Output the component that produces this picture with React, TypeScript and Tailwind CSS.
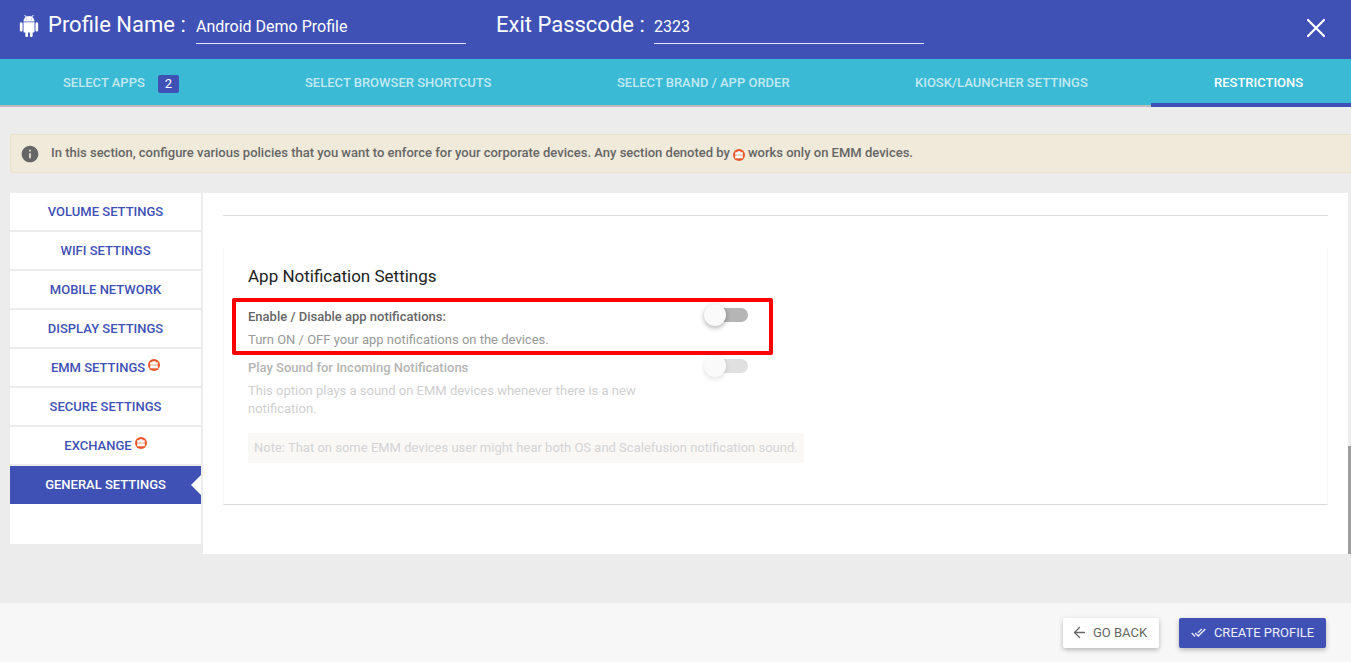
import { ArrowLeft, X } from "lucide-react";
import { MdDoneAll, MdInfo } from "react-icons/md";

const tabs = [
  { label: "SELECT APPS", width: "w-[242px]", badge: "2" },
  { label: "SELECT BROWSER SHORTCUTS", width: "w-[312px]" },
  { label: "SELECT BRAND / APP ORDER", width: "w-[298px]" },
  { label: "KIOSK/LAUNCHER SETTINGS", width: "w-[299px]" },
  { label: "RESTRICTIONS", width: "w-[200px]", active: true },
];

const sections = [
  { label: "VOLUME SETTINGS" },
  { label: "WIFI SETTINGS" },
  { label: "MOBILE NETWORK" },
  { label: "DISPLAY SETTINGS" },
  { label: "EMM SETTINGS", emm: true },
  { label: "SECURE SETTINGS" },
  { label: "EXCHANGE", emm: true },
  { label: "GENERAL SETTINGS", active: true },
];

function AndroidIcon({ className }: { className?: string }) {
  return (
    <svg viewBox="0 0 24 24" fill="currentColor" className={className}>
      <path d="M6 18c0 .55.45 1 1 1h1v3.5c0 .83.67 1.5 1.5 1.5s1.5-.67 1.5-1.5V19h2v3.5c0 .83.67 1.5 1.5 1.5s1.5-.67 1.5-1.5V19h1c.55 0 1-.45 1-1V8H6v10zM3.5 8C2.67 8 2 8.67 2 9.5v7c0 .83.67 1.5 1.5 1.5S5 17.33 5 16.5v-7C5 8.67 4.33 8 3.5 8zm17 0c-.83 0-1.5.67-1.5 1.5v7c0 .83.67 1.5 1.5 1.5s1.5-.67 1.5-1.5v-7c0-.83-.67-1.5-1.5-1.5zm-4.97-5.84l1.3-1.3c.2-.2.2-.51 0-.71-.2-.2-.51-.2-.71 0l-1.48 1.48C13.85 1.23 12.95 1 12 1c-.96 0-1.86.23-2.66.63L7.85.15c-.2-.2-.51-.2-.71 0-.2.2-.2.51 0 .71l1.31 1.31C6.97 3.26 6 5.01 6 7h12c0-1.99-.97-3.75-2.47-4.84zM10 5H9V4h1v1zm5 0h-1V4h1v1z" />
    </svg>
  );
}

function EmmBadge({ className }: { className?: string }) {
  return (
    <svg viewBox="0 0 12 12" className={className}>
      <circle cx="6" cy="6" r="6" fill="#e9572b" />
      <path d="M4.4 3.2V2.3h3.2v.9h2.2v2.5H2.2V3.2z" fill="#fff" />
      <path d="M2.2 6.3h7.6v3H2.2z" fill="#fff" />
    </svg>
  );
}

function Toggle({ muted }: { muted?: boolean }) {
  return (
    <div className="relative mt-[-1px] h-[14px] w-[34px]">
      <div className={`h-full w-full rounded-full ${muted ? "bg-[#e0e0e0]" : "bg-[#b5b5b5]"}`} />
      <div
        className={`absolute left-[-10px] top-[-4px] h-[22px] w-[22px] rounded-full bg-[#fafafa] ${
          muted ? "shadow-[0_2px_5px_rgba(0,0,0,0.12)]" : "shadow-[0_2px_5px_rgba(0,0,0,0.3)]"
        }`}
      />
    </div>
  );
}

export default function App() {
  return (
    <div className="flex h-[662px] w-[1351px] flex-col overflow-hidden bg-[#ececec] font-['Roboto',sans-serif]">
      <header className="flex h-[59px] shrink-0 items-start bg-[#3f51b5] pl-[18px] pt-[14px] text-white">
        <AndroidIcon className="mt-[1px] h-[22px] w-[22px]" />
        <span className="ml-[8px] w-[148px] text-[22px] leading-[22px]">Profile Name :</span>
        <div className="w-[270px] border-b border-[#dfe3f5] pb-[4px] pt-[1px] text-[16px] leading-[24px]">
          Android Demo Profile
        </div>
        <span className="ml-[30px] w-[158px] text-[22px] leading-[22px]">Exit Passcode :</span>
        <div className="w-[270px] border-b border-[#dfe3f5] pb-[4px] pt-[1px] text-[16px] leading-[24px]">
          2323
        </div>
        <X className="ml-auto mr-[19px] mt-[-2px] h-[32px] w-[32px]" strokeWidth={1.6} />
      </header>

      <nav className="flex h-[48px] shrink-0 border-b-2 border-[#bdbdbd] bg-[#3bbad5]">
        {tabs.map((tab) => (
          <div
            key={tab.label}
            className={`relative flex h-[48px] items-center pl-[63px] text-[13px] font-medium ${tab.width} ${
              tab.active ? "border-b-[4px] border-[#3f51b5] text-white" : "text-white/70"
            }`}
          >
            <span className={tab.active ? "pt-[4px]" : ""}>{tab.label}</span>
            {tab.badge && (
              <span className="ml-[13px] mt-[2px] flex h-[18px] w-[21px] items-center justify-center rounded-[2px] bg-[#3f51b5] text-[13px] font-normal text-white">
                {tab.badge}
              </span>
            )}
          </div>
        ))}
      </nav>

      <div className="ml-[10px] mt-[27px] flex h-[39px] shrink-0 items-center rounded-l-[3px] border border-r-0 border-[#ebe3c9] bg-[#f0eadb] pb-[2px] pl-[9px] text-[13px] font-medium text-[#666]">
        <MdInfo className="mt-[2px] h-[20px] w-[20px] text-[#666]" />
        <span className="ml-[11px]">
          In this section, configure various policies that you want to enforce for your corporate devices. Any section denoted by
        </span>
        <EmmBadge className="mx-[3px] mt-[4px] h-[12px] w-[12px]" />
        <span>works only on EMM devices.</span>
      </div>

      <div className="mt-[20px] flex items-start pl-[10px]">
        <aside className="h-[351px] w-[191px] shrink-0 bg-white">
          {sections.map((s) => (
            <div
              key={s.label}
              className={`relative flex items-center justify-center text-[13px] font-medium ${
                s.active ? "h-[38px] bg-[#3f51b5] text-white" : "h-[39px] border-b-2 border-[#ececec] text-[#3f51b5]"
              }`}
            >
              {s.label}
              {s.emm && <EmmBadge className="mb-[5px] ml-[3px] h-[12px] w-[12px]" />}
              {s.active && (
                <span className="absolute right-0 top-[9px] h-0 w-0 border-y-[10px] border-r-[10px] border-y-transparent border-r-white" />
              )}
            </div>
          ))}
        </aside>

        <main className="relative ml-[2px] h-[361px] w-[1145px] bg-white px-[20px]">
          <div className="h-[23px] border-b border-[#dcdcdc]" />
          <section className="mt-[32px] h-[257px] border-x border-b border-x-[#f7f7f7] border-b-[#d9d9d9] pl-[24px] pt-[18px]">
            <h3 className="text-[17px] leading-[20px] text-[#222]">App Notification Settings</h3>
            <div className="mt-[23px] flex h-[48px] w-[500px] items-start justify-between">
              <div>
                <div className="text-[13px] font-medium leading-[16px] text-[#666]">Enable / Disable app notifications:</div>
                <div className="mt-[7px] text-[13px] leading-[16px] text-[#999]">Turn ON / OFF your app notifications on the devices.</div>
              </div>
              <Toggle />
            </div>
            <div className="mt-[3px] flex w-[500px] items-start justify-between">
              <div className="w-[400px]">
                <div className="text-[13px] font-medium leading-[16px] text-[#b5b5b5]">Play Sound for Incoming Notifications</div>
                <div className="mt-[6px] text-[13px] leading-[18px] text-[#cfcfcf]">
                  This option plays a sound on EMM devices whenever there is a new notification.
                </div>
              </div>
              <Toggle muted />
            </div>
            <div className="mt-[15px] flex h-[30px] w-[556px] items-center rounded-[2px] bg-[#f9f8f4] pl-[6px] text-[13px] text-[#d4d4d4]">
              Note: That on some EMM devices user might hear both OS and Scalefusion notification sound.
            </div>
          </section>
          <div className="absolute left-[29px] top-[105px] h-[57px] w-[541px] rounded-[2px] border-[4px] border-[#ff0000]" />
        </main>

        <div className="flex h-[361px] w-[3px] flex-col bg-[#ececec]">
          <div className="mt-auto h-[108px] bg-[#9e9e9e]" />
        </div>
      </div>

      <footer className="mt-auto flex h-[59px] shrink-0 items-center justify-end gap-[20px] bg-[#f7f7f7] pr-[25px]">
        <button className="flex h-[30px] w-[96px] items-center rounded-[2px] bg-white pl-[8px] text-[13px] text-[#666] shadow-[0_2px_5px_rgba(0,0,0,0.26)]">
          <ArrowLeft className="mr-[5px] h-[17px] w-[17px]" strokeWidth={1.8} />
          GO BACK
        </button>
        <button className="flex h-[30px] w-[147px] items-center justify-center rounded-[2px] bg-[#3f51b5] text-[13px] text-white/90 shadow-[0_2px_5px_rgba(0,0,0,0.26)]">
          <MdDoneAll className="mr-[8px] h-[15px] w-[15px]" />
          CREATE PROFILE
        </button>
      </footer>
    </div>
  );
}
